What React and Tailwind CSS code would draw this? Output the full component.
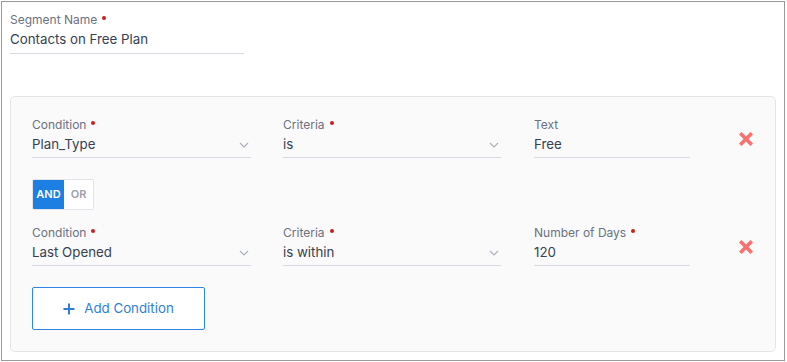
import React from "react";

const Chevron = () => (
  <svg width="10" height="6" viewBox="0 0 10 6" className="shrink-0">
    <path d="M1 1l4 4 4-4" fill="none" stroke="#aab2bd" strokeWidth="1.2" />
  </svg>
);

const Cross = () => (
  <svg width="14" height="14" viewBox="0 0 14 14">
    <path d="M2.5 2.5l9 9M11.5 2.5l-9 9" stroke="#f87171" strokeWidth="3.6" strokeLinecap="square" />
  </svg>
);

const Dot = () => <span className="inline-block w-[4px] h-[4px] rounded-full bg-[#c81e1e] -mt-[4px]" />;

function Field({ label, required, value, select, width }) {
  return (
    <div className={`flex flex-col ${width}`}>
      <div className="text-[12px] leading-[16px] text-[#6b7280] flex items-center gap-[5px]">
        <span>{label}</span>
        {required && <Dot />}
      </div>
      <div className="flex items-center justify-between h-[25px] border-b border-[#d6dbe3] pr-[2px]">
        <span className="text-[13.3px] text-[#374151]">{value}</span>
        {select && <Chevron />}
      </div>
    </div>
  );
}

function Row({ c1, c2, c3label, c3req, c3 }) {
  return (
    <div className="flex items-start">
      <Field label="Condition" required value={c1} select width="w-[219px]" />
      <div className="w-[32px]" />
      <Field label="Criteria" required value={c2} select width="w-[218px]" />
      <div className="w-[33px]" />
      <Field label={c3label} required={c3req} value={c3} width="w-[156px]" />
      <div className="ml-[49px] mt-[15px]">
        <Cross />
      </div>
    </div>
  );
}

export default function App() {
  return (
    <div className="w-[787px] h-[362px] bg-white p-[1px] font-['Inter',sans-serif]">
      <div className="w-[784px] h-[360px] border border-[#9a9a9a] pl-[8px] pr-[8px] pt-[10px]">
        <div className="text-[12px] leading-[16px] text-[#6b7280] flex items-center gap-[5px]">
          <span>Segment Name</span>
          <Dot />
        </div>
        <div className="w-[234px] h-[26px] pb-[1px] border-b border-[#d6dbe3] flex items-center">
          <span className="text-[13.3px] text-[#374151]">Contacts on Free Plan</span>
        </div>
        <div className="mt-[42px] h-[256px] rounded-[5px] border border-[#e3e5e8] bg-[#fafafa] px-[21px] pt-[20px]">
          <Row c1="Plan_Type" c2="is" c3label="Text" c3="Free" />
          <div className="mt-[21px] flex w-[62px] h-[31px] rounded-[2px] overflow-hidden border border-[#e1e4e8] text-[11px] font-semibold">
            <div className="w-[31px] bg-[#1e7fe2] text-white flex items-center justify-center">AND</div>
            <div className="flex-1 bg-white text-[#9aa1ab] flex items-center justify-center">OR</div>
          </div>
          <div className="mt-[15px]">
            <Row c1="Last Opened" c2="is within" c3label="Number of Days" c3req c3="120" />
          </div>
          <button className="mt-[21px] w-[173px] h-[43px] rounded-[2px] border border-[#2f86e6] bg-white text-[#2f7fd6] text-[13.3px] flex items-center justify-center gap-[9px]">
            <svg width="12" height="12" viewBox="0 0 12 12">
              <path d="M6 0.5v11M0.5 6h11" stroke="#2f7fd6" strokeWidth="2" />
            </svg>
            <span>Add Condition</span>
          </button>
        </div>
      </div>
    </div>
  );
}
